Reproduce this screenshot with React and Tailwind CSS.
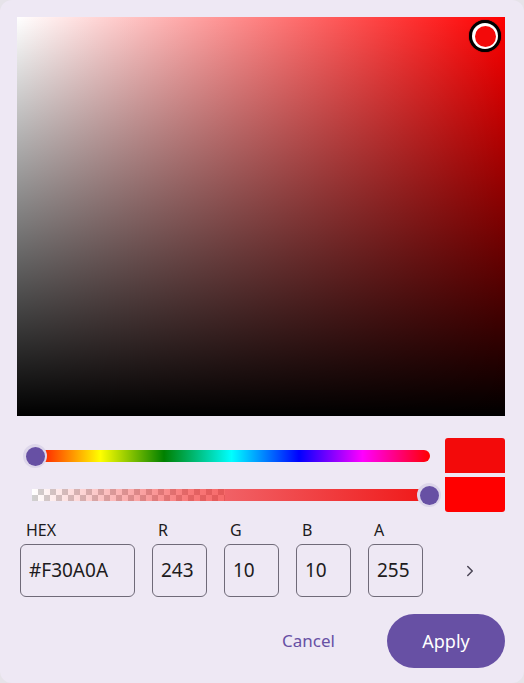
import { ChevronRight } from 'lucide-react'

const FIELDS = [
  { label: 'R', value: '243' },
  { label: 'G', value: '10' },
  { label: 'B', value: '10' },
  { label: 'A', value: '255' },
]

function Thumb() {
  return (
    <div className="w-[24px] h-[24px] rounded-full bg-[#ddd6ea] flex items-center justify-center">
      <div className="w-[19px] h-[19px] rounded-full bg-[#6750a4]" />
    </div>
  )
}

export default function App() {
  return (
    <div className="w-[524px] h-[683px] overflow-hidden bg-[#e6e3e9] font-['Noto_Sans',sans-serif]">
      <div className="w-full h-full bg-[#eee8f4] rounded-[12px] p-[17px] flex flex-col">
        {/* spectrum */}
        <div className="relative shrink-0 h-[399px] w-[488px] bg-[linear-gradient(to_bottom,transparent,#000),linear-gradient(to_right,#fff,#f00)]">
          <div className="absolute right-[4px] top-[3px] w-[32px] h-[32px] rounded-full bg-black shadow-[0_0_1px_#000] flex items-center justify-center">
            <div className="w-[26px] h-[26px] rounded-full bg-white flex items-center justify-center">
              <div className="w-[21px] h-[21px] rounded-full bg-[#f30a0a]" />
            </div>
          </div>
        </div>

        {/* sliders + preview */}
        <div className="flex shrink-0 mt-[22px] w-[488px]">
          <div className="flex-1 flex flex-col gap-[4px]">
            <div className="h-[35px] relative flex items-center pl-[16px] pr-[10px]">
              <div className="h-[12px] w-full rounded-r-full bg-[linear-gradient(to_right,#f00,#ff0_17%,#008000_33%,#0ff_50%,#00f_67%,#f0f_83%,#f00)]" />
              <div className="absolute left-[6px] top-[6px]">
                <Thumb />
              </div>
            </div>
            <div className="h-[35px] relative flex items-center pl-[15px] pr-[12px]">
              <div className="relative h-[12px] w-full overflow-hidden">
                <div className="absolute inset-y-0 left-0 w-[193px] bg-[repeating-conic-gradient(#d0d0d0_0_25%,#ffffff_0_50%)] bg-[length:12px_12px]" />
                <div className="absolute inset-0 bg-[linear-gradient(to_right,rgba(243,10,10,0),rgba(243,10,10,0.55)_40%,#f01818)]" />
              </div>
              <div className="absolute right-[-1px] top-[6px]">
                <Thumb />
              </div>
            </div>
          </div>
          <div className="w-[60px] ml-[5px] flex flex-col gap-[4px]">
            <div className="h-[35px] bg-[#f30a0a] rounded-t-[3px]" />
            <div className="h-[35px] bg-[#ff0000] rounded-b-[3px]" />
          </div>
        </div>

        {/* inputs */}
        <div className="flex shrink-0 items-end mt-[8px] pl-[3px] text-[#1d1b20]">
          <div className="flex flex-col">
            <span className="text-[16px] leading-[20px] pl-[6px] mb-[4px]">HEX</span>
            <div className="w-[115px] h-[53px] border-[1.5px] border-[#6f6a78] rounded-[6px] flex items-center pl-[8px] text-[19px]">
              #F30A0A
            </div>
          </div>
          {FIELDS.map(f => (
            <div key={f.label} className="flex flex-col ml-[17px]">
              <span className="text-[16px] leading-[20px] pl-[6px] mb-[4px]">{f.label}</span>
              <div className="w-[55px] h-[53px] border-[1.5px] border-[#6f6a78] rounded-[6px] flex items-center pl-[8px] text-[19px]">
                {f.value}
              </div>
            </div>
          ))}
          <div className="h-[53px] flex items-center ml-[38px]">
            <ChevronRight size={18} strokeWidth={2} className="text-[#4a4555]" />
          </div>
        </div>

        {/* actions */}
        <div className="flex shrink-0 items-center justify-end mt-[17px] w-[488px]">
          <button className="text-[#6750a4] text-[17px] mr-[52px]">Cancel</button>
          <button className="w-[118px] h-[54px] rounded-full bg-[#6750a4] text-white text-[18px]">Apply</button>
        </div>
      </div>
    </div>
  )
}
